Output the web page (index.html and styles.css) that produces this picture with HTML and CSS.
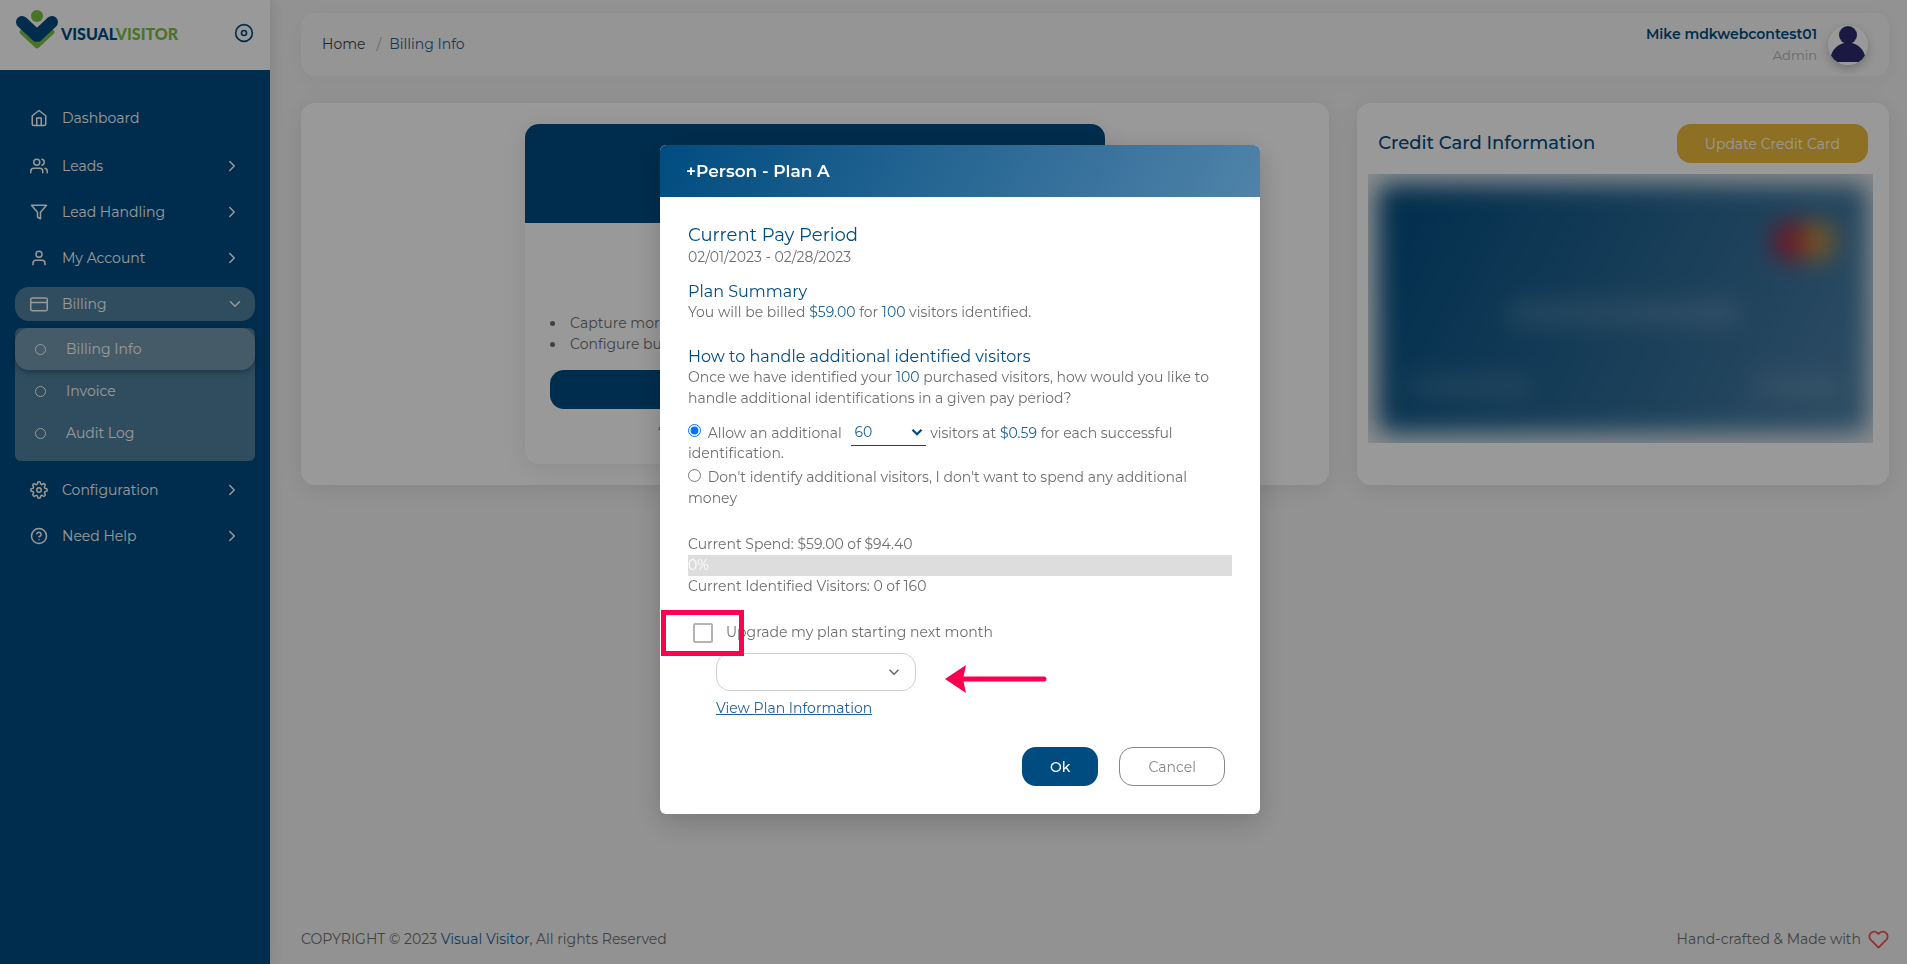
FILE: index.html
```
<!DOCTYPE html>
<html lang="en">
<head>
  <meta charset="UTF-8">
  <meta name="viewport" content="width=device-width, initial-scale=1.0">
  <title>Billing Info - Visual Visitor</title>
  <link rel="stylesheet" href="styles.css">
</head>
<body>
  <div class="app">
    <!-- Sidebar -->
    <aside class="sidebar">
      <div class="sidebar-header">
        <a href="#" class="logo">
          <svg width="42" height="40" viewBox="0 0 42 40">
            <path d="M6 22 21 36 36 22" fill="none" stroke="#7ac143" stroke-width="5" stroke-linejoin="round" stroke-linecap="round"/>
            <circle cx="21" cy="6" r="6" fill="#7ac143"/>
            <path d="M6 12 21 26 36 12" fill="none" stroke="#004c80" stroke-width="12" stroke-linejoin="round" stroke-linecap="round"/>
          </svg>
          <span class="logo-text">VISUAL<span>VISITOR</span></span>
        </a>
        <button type="button" class="menu-toggle" aria-label="Toggle menu">
          <svg class="icon" viewBox="0 0 24 24"><circle cx="12" cy="12" r="10"/><circle cx="12" cy="12" r="3"/></svg>
        </button>
      </div>

      <nav class="menu">
        <a href="#" class="menu-item first">
          <svg class="icon" viewBox="0 0 24 24"><path d="M3 9l9-7 9 7v11a2 2 0 0 1-2 2H5a2 2 0 0 1-2-2z"/><path d="M9 22V12h6v10"/></svg>
          <span>Dashboard</span>
        </a>
        <a href="#" class="menu-item">
          <svg class="icon" viewBox="0 0 24 24"><path d="M17 21v-2a4 4 0 0 0-4-4H5a4 4 0 0 0-4 4v2"/><circle cx="9" cy="7" r="4"/><path d="M23 21v-2a4 4 0 0 0-3-3.87M16 3.13a4 4 0 0 1 0 7.75"/></svg>
          <span>Leads</span>
          <svg class="icon chevron" viewBox="0 0 24 24"><path d="M9 18l6-6-6-6"/></svg>
        </a>
        <a href="#" class="menu-item">
          <svg class="icon" viewBox="0 0 24 24"><path d="M22 3H2l8 9.46V19l4 2v-8.54L22 3z"/></svg>
          <span>Lead Handling</span>
          <svg class="icon chevron" viewBox="0 0 24 24"><path d="M9 18l6-6-6-6"/></svg>
        </a>
        <a href="#" class="menu-item">
          <svg class="icon" viewBox="0 0 24 24"><path d="M20 21v-2a4 4 0 0 0-4-4H8a4 4 0 0 0-4 4v2"/><circle cx="12" cy="7" r="4"/></svg>
          <span>My Account</span>
          <svg class="icon chevron" viewBox="0 0 24 24"><path d="M9 18l6-6-6-6"/></svg>
        </a>
        <a href="#" class="menu-item open">
          <svg class="icon" viewBox="0 0 24 24"><rect x="1" y="4" width="22" height="17" rx="2"/><path d="M1 10h22"/></svg>
          <span>Billing</span>
          <svg class="icon chevron" viewBox="0 0 24 24"><path d="M6 9l6 6 6-6"/></svg>
        </a>
        <div class="submenu">
          <a href="#" class="active"><i></i>Billing Info</a>
          <a href="#"><i></i>Invoice</a>
          <a href="#"><i></i>Audit Log</a>
        </div>
        <a href="#" class="menu-item">
          <svg class="icon" viewBox="0 0 24 24"><circle cx="12" cy="12" r="3"/><path d="M19.4 15a1.65 1.65 0 0 0 .33 1.82l.06.06a2 2 0 0 1-2.83 2.83l-.06-.06a1.65 1.65 0 0 0-2.8 1.17V21a2 2 0 0 1-4 0v-.09A1.65 1.65 0 0 0 9 19.4a1.65 1.65 0 0 0-1.82.33l-.06.06a2 2 0 0 1-2.83-2.83l.06-.06a1.65 1.65 0 0 0-1.17-2.8H3a2 2 0 0 1 0-4h.09A1.65 1.65 0 0 0 4.6 9a1.65 1.65 0 0 0-.33-1.82l-.06-.06a2 2 0 0 1 2.83-2.83l.06.06A1.65 1.65 0 0 0 9 4.6a1.65 1.65 0 0 0 1-1.51V3a2 2 0 0 1 4 0v.09a1.65 1.65 0 0 0 2.8 1.17l.06-.06a2 2 0 0 1 2.83 2.83l-.06.06A1.65 1.65 0 0 0 19.4 9a1.65 1.65 0 0 0 1.51 1H21a2 2 0 0 1 0 4h-.09a1.65 1.65 0 0 0-1.51 1z"/></svg>
          <span>Configuration</span>
          <svg class="icon chevron" viewBox="0 0 24 24"><path d="M9 18l6-6-6-6"/></svg>
        </a>
        <a href="#" class="menu-item">
          <svg class="icon" viewBox="0 0 24 24"><circle cx="12" cy="12" r="10"/><path d="M9.09 9a3 3 0 0 1 5.83 1c0 2-3 3-3 3M12 17v.01"/></svg>
          <span>Need Help</span>
          <svg class="icon chevron" viewBox="0 0 24 24"><path d="M9 18l6-6-6-6"/></svg>
        </a>
      </nav>
    </aside>

    <!-- Page content -->
    <main class="main">
      <header class="topbar">
        <div class="breadcrumb">
          <a href="#" class="home">Home</a>
          <span class="slash">/</span>
          <a href="#">Billing Info</a>
        </div>
        <div class="user">
          <div class="user-text">
            <strong>Mike mdkwebcontest01</strong>
            <span>Admin</span>
          </div>
          <svg class="avatar" width="40" height="40" viewBox="0 0 40 40">
            <circle cx="20" cy="20" r="20" fill="#fff"/>
            <circle cx="20" cy="10" r="9" fill="#2e2a6e"/>
            <path d="M16 16h8v2c8 2 12 8 13 13-1 3-3 5-5 6H8c-2-1-4-3-5-6 1-5 5-11 13-13z" fill="#2e2a6e"/>
          </svg>
        </div>
      </header>

      <div class="cards">
        <section class="card plan-wrap">
          <div class="plan">
            <div class="plan-header"></div>
            <div class="plan-body">
              <ul>
                <li>Capture mor</li>
                <li>Configure bu</li>
              </ul>
              <button type="button" class="btn btn-primary btn-block" aria-label="Change plan"></button>
              <p class="plan-note">*</p>
            </div>
          </div>
        </section>

        <section class="card credit">
          <div class="credit-header">
            <h2>Credit Card Information</h2>
            <button type="button" class="btn btn-warning">Update Credit Card</button>
          </div>
          <div class="credit-card">
            <div class="card-face">
              <svg class="brand" width="68" height="42" viewBox="0 0 68 42">
                <circle cx="22" cy="21" r="20" fill="#eb001b"/>
                <circle cx="46" cy="21" r="20" fill="#f79e1b"/>
                <path d="M34 5a20 20 0 0 1 0 32 20 20 0 0 1 0-32z" fill="#ff5f00"/>
              </svg>
              <div class="card-number"></div>
              <div class="card-row">
                <div class="card-name"></div>
                <div class="card-expiry"></div>
              </div>
            </div>
          </div>
        </section>
      </div>

      <footer class="footer">
        <span>COPYRIGHT © 2023 <a href="#">Visual Visitor</a>, All rights Reserved</span>
        <span class="made-with">Hand-crafted &amp; Made with
          <svg width="21" height="21" viewBox="0 0 24 24" fill="none" stroke="#ea5455" stroke-width="2" stroke-linejoin="round"><path d="M20.84 4.61a5.5 5.5 0 0 0-7.78 0L12 5.67l-1.06-1.06a5.5 5.5 0 0 0-7.78 7.78L12 21.23l8.84-8.84a5.5 5.5 0 0 0 0-7.78z"/></svg>
        </span>
      </footer>
    </main>
  </div>

  <!-- Plan modal -->
  <div class="overlay">
    <div class="modal" role="dialog" aria-labelledby="modalTitle">
      <div class="modal-header">
        <h1 id="modalTitle">+Person - Plan A</h1>
      </div>
      <form class="modal-body">
        <h3 class="period">Current Pay Period</h3>
        <p>02/01/2023 - 02/28/2023</p>

        <h3 class="summary">Plan Summary</h3>
        <p>You will be billed <b>$59.00</b> for <b>100</b> visitors identified.</p>

        <h3 class="handling">How to handle additional identified visitors</h3>
        <p>Once we have identified your <b>100</b> purchased visitors, how would you like to handle additional identifications in a given pay period?</p>

        <div class="option option-allow">
          <input type="radio" name="extra" id="allow" checked>
          <label for="allow">Allow an additional</label>
          <select class="extra-count" aria-label="Additional visitors">
            <option>60</option>
          </select>
          visitors at <b>$0.59</b> for each successful identification.
        </div>
        <div class="option">
          <input type="radio" name="extra" id="deny">
          <label for="deny">Don't identify additional visitors, I don't want to spend any additional money</label>
        </div>

        <div class="spend">
          <p>Current Spend: $59.00 of $94.40</p>
          <div class="progress">0%</div>
          <p>Current Identified Visitors: 0 of 160</p>
        </div>

        <div class="upgrade">
          <input type="checkbox" id="upgrade">
          <label for="upgrade">Upgrade my plan starting next month</label>
          <span class="highlight"></span>
        </div>
        <div class="plan-select">
          <select aria-label="Plan"><option></option></select>
          <svg class="arrow" width="102" height="28" viewBox="0 0 102 28">
            <path d="M0 14 21 0 18 14 21 28z" fill="#ff0050"/>
            <path d="M16 14H99" stroke="#ff0050" stroke-width="5" stroke-linecap="round"/>
          </svg>
        </div>
        <a href="#" class="plan-link">View Plan Information</a>

        <div class="buttons">
          <button type="button" class="btn btn-primary">Ok</button>
          <button type="button" class="btn btn-outline">Cancel</button>
        </div>
      </form>
    </div>
  </div>
</body>
</html>
```
FILE: styles.css
```
* {
  box-sizing: border-box;
}

body {
  margin: 0;
  font-family: Montserrat, Inter, sans-serif;
  font-size: 14px;
  line-height: 21px;
  color: #6e6e6e;
  background: #f4f4f4;
}

h1, h2, h3, p, ul {
  margin: 0;
  padding: 0;
}

a {
  color: #1f6396;
  text-decoration: none;
}

button, select {
  font-family: inherit;
  font-size: 14px;
}

.app {
  display: flex;
  min-height: 100vh;
}

.icon {
  width: 18px;
  height: 18px;
  flex: none;
  fill: none;
  stroke: currentColor;
  stroke-width: 2;
  stroke-linecap: round;
  stroke-linejoin: round;
}

/* Sidebar */
.sidebar {
  width: 270px;
  flex: none;
  background: #004c80;
  box-shadow: 0 0 15px rgba(34, 41, 47, 0.15);
}

.sidebar-header {
  display: flex;
  justify-content: space-between;
  align-items: flex-start;
  height: 70px;
  padding: 10px 16px;
  background: #fff;
}

.logo {
  display: flex;
  align-items: center;
  gap: 3px;
  color: #004c80;
}

.logo-text {
  padding-top: 6px;
  font-family: Lato, sans-serif;
  font-size: 16px;
  font-weight: 900;
}

.logo-text span {
  color: #7ac143;
}

.menu-toggle {
  display: flex;
  padding: 0;
  margin-top: 13px;
  border: none;
  background: none;
  color: #004c80;
}

.menu-toggle .icon {
  width: 20px;
  height: 20px;
}

.menu {
  display: flex;
  flex-direction: column;
  gap: 12px;
  padding: 31px 15px;
}

.menu-item {
  display: flex;
  align-items: center;
  gap: 14px;
  height: 34px;
  padding: 0 15px;
  border-radius: 14px;
  color: #fff;
}

.menu-item.first {
  margin-bottom: 2px;
}

.menu-item .chevron {
  margin-left: auto;
}

.menu-item:not(.open) .chevron {
  margin-right: -1px;
}

.menu-item.open {
  background: #50819f;
}

.menu-item.open .chevron {
  margin-right: -4px;
}

.submenu {
  height: 133px;
  margin-top: -5px;
  border-radius: 6px;
  background: #50819f;
}

.submenu a {
  display: flex;
  align-items: center;
  gap: 20px;
  height: 42px;
  padding: 0 20px;
  color: #fff;
}

.submenu i {
  width: 11px;
  height: 11px;
  border: 1px solid #fff;
  border-radius: 50%;
}

.submenu a.active {
  border-radius: 14px;
  background: #7698ad;
  box-shadow: 0 2px 6px rgba(0, 30, 60, 0.4);
}

/* Main */
.main {
  flex: 1;
  display: flex;
  flex-direction: column;
  padding: 13px 18px 14px 31px;
}

.topbar {
  display: flex;
  justify-content: space-between;
  align-items: center;
  height: 63px;
  padding: 0 21px;
  border-radius: 14px;
  background: #f8f8f8;
  box-shadow: 0 4px 24px rgba(34, 41, 47, 0.05);
}

.breadcrumb {
  display: flex;
}

.breadcrumb .home {
  color: #444;
}

.breadcrumb .slash {
  margin: 0 8px 0 11px;
  color: #b0aeb8;
}

.user {
  display: flex;
  align-items: center;
  gap: 11px;
}

.user-text {
  display: flex;
  flex-direction: column;
  align-items: flex-end;
}

.user-text strong {
  font-weight: 600;
  color: #004c80;
}

.user-text span {
  font-size: 13px;
  color: #b0b0b0;
}

.avatar {
  border-radius: 50%;
  box-shadow: 0 4px 8px rgba(34, 41, 47, 0.25);
}

.cards {
  display: grid;
  grid-template-columns: 29fr 15fr;
  gap: 28px;
  margin-top: 27px;
}

.card {
  min-height: 382px;
  border-radius: 14px;
  background: #fff;
  box-shadow: 0 4px 24px rgba(34, 41, 47, 0.1);
}

.plan-wrap {
  display: flex;
  justify-content: center;
  padding: 21px;
}

.plan {
  width: 580px;
  border-radius: 14px;
  overflow: hidden;
  box-shadow: 0 4px 24px rgba(34, 41, 47, 0.1);
}

.plan-header {
  height: 99px;
  background: #004c80;
}

.plan-body {
  padding: 90px 25px 20px;
}

.plan-body ul {
  padding-left: 16px;
}

.plan-body li {
  padding-left: 4px;
}

.plan-note {
  margin-top: 13px;
  padding-left: 108px;
}

.credit {
  padding: 21px;
}

.credit-header {
  display: flex;
  justify-content: space-between;
  align-items: center;
}

.credit-header h2 {
  font-size: 18px;
  font-weight: 500;
  color: #004c80;
}

.credit-card {
  margin: 11px -5px 0 -10px;
  padding: 10px 5px 10px 10px;
  overflow: hidden;
  background: #e6eaed;
}

.card-face {
  display: flex;
  flex-direction: column;
  height: 249px;
  padding: 36px 30px;
  border-radius: 12px;
  background: linear-gradient(118deg, #004c80, #4e81a6);
  filter: blur(12px);
}

.brand {
  align-self: flex-end;
  opacity: 0.7;
}

.card-number {
  align-self: center;
  width: 230px;
  height: 22px;
  margin-top: 40px;
  background: rgba(255, 255, 255, 0.16);
}

.card-row {
  display: flex;
  justify-content: space-between;
  margin-top: 52px;
}

.card-name, .card-expiry {
  width: 120px;
  height: 20px;
  background: rgba(255, 255, 255, 0.14);
}

.card-expiry {
  width: 80px;
}

.footer {
  display: flex;
  justify-content: space-between;
  align-items: center;
  margin-top: auto;
}

.made-with {
  display: flex;
  align-items: center;
  gap: 7px;
}

/* Buttons */
.btn {
  height: 39px;
  padding: 0 28px;
  border: none;
  border-radius: 14px;
  font-weight: 500;
}

.btn-primary {
  background: #004c80;
  color: #fff;
}

.btn-block {
  display: block;
  width: 100%;
  margin-top: 15px;
}

.btn-warning {
  background: #ecbb3c;
  color: #fff;
  font-weight: 400;
}

.btn-outline {
  border: 1px solid #82868b;
  background: #fff;
  color: #82868b;
  font-weight: 400;
}

/* Modal */
.overlay {
  position: fixed;
  inset: 0;
  display: flex;
  justify-content: center;
  align-items: center;
  padding: 0 0 5px 13px;
  background: rgba(0, 0, 0, 0.4);
}

.modal {
  width: 600px;
  border-radius: 6px;
  overflow: hidden;
  background: #fff;
  box-shadow: 0 8px 30px rgba(0, 0, 0, 0.2);
}

.modal-header {
  padding: 16px 26px 15px;
  background: linear-gradient(118deg, #004c80, #5083a9);
}

.modal-header h1 {
  font-size: 17px;
  line-height: 21px;
  font-weight: 600;
  color: #fff;
}

.modal-body {
  padding: 27px 28px 28px;
}

.modal-body h3 {
  font-size: 16px;
  line-height: 20px;
  font-weight: 400;
  color: #004c80;
}

.modal-body h3.period {
  font-size: 18px;
  line-height: 23px;
}

.modal-body h3.summary {
  margin-top: 14px;
}

.modal-body h3.handling {
  margin-top: 24px;
}

.modal-body b {
  font-weight: 400;
  color: #1f6396;
}

.option input {
  margin: 0 3px 0 0;
}

.option-allow {
  margin: 11px 0 3px;
}

select {
  appearance: none;
  background: #fff no-repeat right center;
}

.extra-count {
  width: 75px;
  height: 26px;
  margin: 0 0 -3px 6px;
  padding: 0 3px;
  border: none;
  border-bottom: 1px solid #004c80;
  border-radius: 0;
  color: #1f6396;
  background-image: url("data:image/svg+xml,%3Csvg xmlns='http://www.w3.org/2000/svg' width='18' height='18' viewBox='0 0 24 24' fill='none' stroke='%23004c80' stroke-width='3'%3E%3Cpath d='M6 9l6 6 6-6'/%3E%3C/svg%3E");
}

.spend {
  margin-top: 25px;
}

.progress {
  height: 21px;
  background: #ddd;
  color: #fff;
}

.upgrade {
  position: relative;
  z-index: 1;
  display: flex;
  align-items: center;
  gap: 13px;
  margin-top: 25px;
  padding-left: 5px;
}

.upgrade input {
  appearance: none;
  width: 20px;
  height: 20px;
  margin: 0;
  border: 2px solid #b4b4b4;
  border-radius: 2px;
}

/* Callout frame drawn over the checkbox */
.highlight {
  position: absolute;
  left: -27px;
  top: -12px;
  width: 83px;
  height: 46px;
  border: 5px solid #ff0050;
}

.plan-select {
  position: relative;
  margin: 10px 0 7px 28px;
}

.plan-select select {
  display: block;
  width: 200px;
  height: 38px;
  border: 1px solid #d0d0d0;
  border-radius: 14px;
  background-position: right 12px center;
  background-image: url("data:image/svg+xml,%3Csvg xmlns='http://www.w3.org/2000/svg' width='18' height='18' viewBox='0 0 24 24' fill='none' stroke='%23666' stroke-width='2'%3E%3Cpath d='M6 9l6 6 6-6'/%3E%3C/svg%3E");
}

.arrow {
  position: absolute;
  left: 229px;
  top: 12px;
}

.plan-link {
  margin-left: 28px;
  text-decoration: underline;
}

.buttons {
  display: flex;
  justify-content: flex-end;
  gap: 21px;
  margin-top: 28px;
  padding-right: 7px;
}
```
